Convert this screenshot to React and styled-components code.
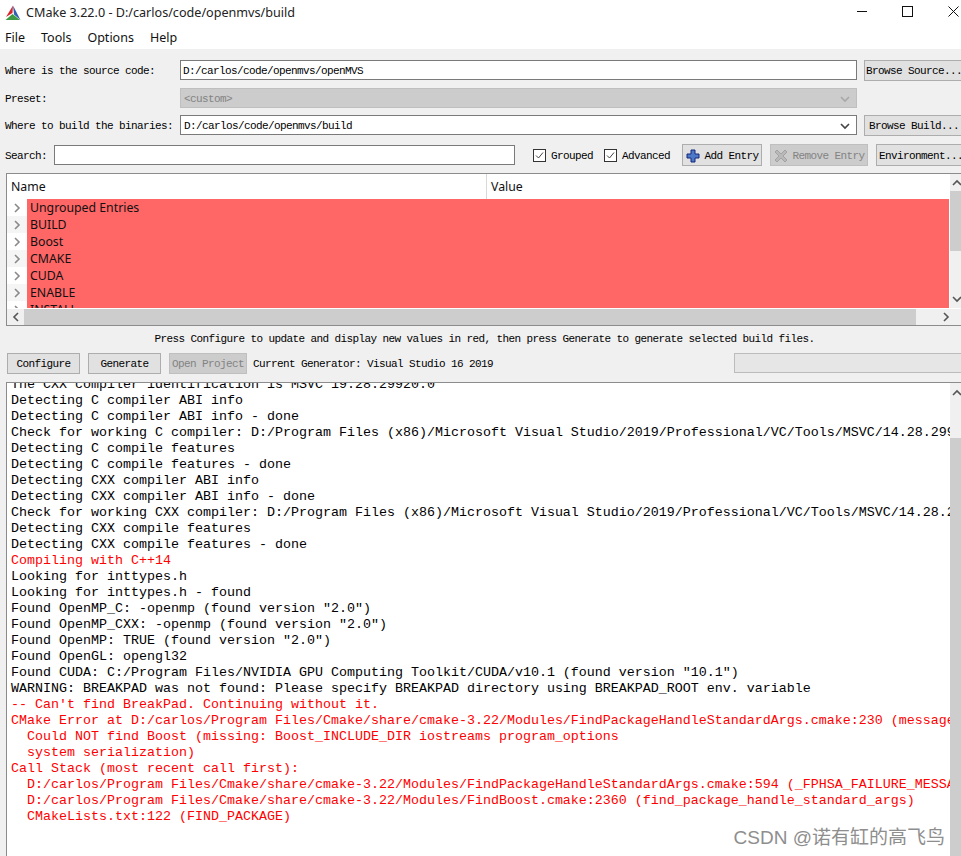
import React from 'react'
import styled, { createGlobalStyle } from 'styled-components'

const GlobalStyle = createGlobalStyle`
	html, body {
		margin: 0;
		padding: 0;
		background: #ffffff;
	}
`

const Win = styled.div`
	position: relative;
	width: 961px;
	height: 856px;
	overflow: hidden;
	background: #f0f0f0;
	color: #000;
	font-family: "Liberation Mono", monospace;
	font-size: 11px;
	letter-spacing: -0.6px;
`

const TitleBar = styled.div`
	display: flex;
	align-items: center;
	height: 25px;
	background: #fff;
	padding-left: 5px;
	margin-right: -15px;
	font-family: "Noto Sans", "Liberation Sans", sans-serif;
	font-size: 12.6px;
	letter-spacing: 0;
	color: #222;
`

const Title = styled.span`
	margin-left: 5px;
	flex: 1;
`

const WinButton = styled.div`
	width: 45.5px;
	height: 22px;
	align-self: flex-start;
	display: flex;
	align-items: center;
	justify-content: center;
`

const MenuBar = styled.div`
	display: flex;
	gap: 16px;
	height: 24px;
	padding: 1px 0 0 5px;
	box-sizing: border-box;
	background: #fff;
	align-items: center;
	font-family: "Noto Sans", "Liberation Sans", sans-serif;
	font-size: 12.5px;
	letter-spacing: 0;
	color: #111;
`

const Form = styled.div`
	display: flex;
	flex-direction: column;
	padding: 11px 0 0 5px;
`

const FormRow = styled.div`
	display: flex;
	align-items: ${p => p.$h ? 'center' : 'flex-start'};
	height: ${p => p.$h || 21}px;
	margin-bottom: ${p => p.$gap}px;
`

const Label = styled.div`
	display: flex;
	align-items: center;
	box-sizing: border-box;
	height: 20px;
	padding-top: 1px;
	width: ${p => p.$w}px;
	flex: none;
`

const Field = styled.div`
	display: flex;
	align-items: center;
	justify-content: space-between;
	box-sizing: border-box;
	width: ${p => p.$w}px;
	height: 20px;
	flex: none;
	padding: 1px 6px 0 ${p => p.$pad || 3}px;
	background: ${p => p.$disabled ? '#cccccc' : '#fff'};
	border: 1px solid ${p => p.$disabled ? '#bfbfbf' : '#7a7a7a'};
	color: ${p => p.$disabled ? '#838383' : '#000'};
`

const Btn = styled.div`
	display: flex;
	align-items: center;
	justify-content: center;
	gap: 5px;
	box-sizing: border-box;
	flex: none;
	padding-top: 1px;
	width: ${p => p.$w}px;
	height: ${p => p.$h || 21}px;
	margin-left: ${p => p.$ml || 0}px;
	background: ${p => p.$disabled ? '#cccccc' : '#e1e1e1'};
	border: 1px solid ${p => p.$disabled ? '#bfbfbf' : '#adadad'};
	color: ${p => p.$disabled ? '#838383' : '#000'};
	white-space: nowrap;
	overflow: hidden;
`

const Check = styled.div`
	display: flex;
	align-items: center;
	gap: 5px;
	flex: none;
	padding-top: 1px;
	margin-left: ${p => p.$ml}px;
`

const Box = styled.div`
	width: 11px;
	height: 11px;
	background: #fff;
	border: 1px solid #333;
	display: flex;
	align-items: center;
	justify-content: center;
`

const Tree = styled.div`
	box-sizing: border-box;
	width: 961px;
	height: 153px;
	margin: 7px 0 0 6px;
	background: #fff;
	border: 1px solid #8c8c8c;
	border-right: none;
	display: grid;
	grid-template-columns: 942px 1fr;
	grid-template-rows: 134px 17px;
	font-family: "Noto Sans", "Liberation Sans", sans-serif;
	font-size: 12.3px;
	letter-spacing: 0;
	color: #111;
`

const TreeMain = styled.div`
	overflow: hidden;
	display: flex;
	flex-direction: column;
`

const TreeHead = styled.div`
	display: flex;
	height: 25px;
	flex: none;
	align-items: center;
`

const HeadCell = styled.div`
	width: ${p => p.$w}px;
	height: 25px;
	box-sizing: border-box;
	display: flex;
	align-items: center;
	padding-left: 4px;
	border-right: ${p => p.$sep ? '1px solid #d9d9d9' : 'none'};
`

const TreeRow = styled.div`
	display: flex;
	height: 17px;
	flex: none;
	background: ${p => p.$alt ? '#f5f5f5' : '#fff'};
`

const Arrow = styled.div`
	width: 20px;
	flex: none;
	display: flex;
	align-items: center;
	justify-content: center;
`

const RowLabel = styled.div`
	flex: 1;
	background: #ff6666;
	padding-left: 3px;
	line-height: 17px;
`

const ScrollV = styled.div`
	display: flex;
	flex-direction: column;
	align-items: flex-start;
	background: #f0f0f0;
	margin-left: 1px;
`

const ScrollH = styled.div`
	display: flex;
	align-items: center;
	background: #f0f0f0;
	grid-column: 1 / 3;
	height: 16px;
	margin-top: 1px;
`

const ScrollEnd = styled.div`
	flex: none;
	display: flex;
	align-items: center;
	justify-content: center;
	width: ${p => p.$w || 14}px;
	height: ${p => p.$h || 16}px;
`

const Thumb = styled.div`
	background: #cdcdcd;
	flex: none;
	width: ${p => p.$w}px;
	height: ${p => p.$h}px;
	margin-top: ${p => p.$mt || 0}px;
`

const Spacer = styled.div`
	flex: 1;
`

const Hint = styled.div`
	text-align: center;
	height: 27px;
	line-height: 26px;
	padding-left: 8px;
`

const ActionRow = styled.div`
	display: flex;
	align-items: flex-start;
	padding-left: 7px;
	height: 21px;
`

const Generator = styled.div`
	margin-left: 6px;
	width: 481px;
	flex: none;
	line-height: 22px;
`

const Progress = styled.div`
	flex: 1;
	height: 20px;
	box-sizing: border-box;
	background: #e6e6e6;
	border: 1px solid #bcbcbc;
	border-right: none;
`

const Log = styled.div`
	display: flex;
	box-sizing: border-box;
	width: 955px;
	height: 474px;
	margin: 8px 0 0 6px;
	background: #fff;
	border-top: 1px solid #8c8c8c;
	border-left: 1px solid #8c8c8c;
	overflow: hidden;
`

const LogBody = styled.div`
	box-sizing: border-box;
	width: 943px;
	padding-left: 4px;
	overflow: hidden;
	flex: none;
	margin-top: -6px;
`

const LogLine = styled.div`
	font-size: 13.33px;
	letter-spacing: 0;
	line-height: 16px;
	height: 16px;
	white-space: pre;
	color: ${p => p.$err ? '#ff0000' : '#000'};
`

const LogScroll = styled.div`
	flex: 1;
	display: flex;
	flex-direction: column;
	align-items: flex-start;
	background: #f0f0f0;
	overflow: hidden;
`

const Watermark = styled.div`
	position: absolute;
	right: 16px;
	top: 822px;
	font-family: "Liberation Sans", "Noto Sans CJK SC", sans-serif;
	font-size: 19px;
	letter-spacing: 0;
	color: #8e8e8e;
	white-space: nowrap;
`

const Chevron = ({ dir = 'right', color = '#555', size = 10 }) => {
	const pts = {
		right: '3,1 7,5 3,9',
		left: '7,1 3,5 7,9',
		up: '1,7 5,3 9,7',
		down: '1,3 5,7 9,3'
	}
	return (
		<svg width={size} height={size} viewBox="0 0 10 10">
			<polyline points={pts[dir]} fill="none" stroke={color} strokeWidth="1.6" />
		</svg>
	)
}

const Logo = () => (
	<svg width="16" height="16" viewBox="0 0 16 16">
		<polygon points="8,0.5 1,12 7.5,8" fill="#d8242c" />
		<polygon points="8,0.5 15.5,15 9,9.5" fill="#2f5fb3" />
		<polygon points="0.5,15 15,15 7.5,9" fill="#3f9a46" />
	</svg>
)

const CheckMark = () => (
	<svg width="9" height="9" viewBox="0 0 9 9">
		<polyline points="1,4.5 3.5,7 8,1.5" fill="none" stroke="#444" strokeWidth="1" />
	</svg>
)

const PlusIcon = () => (
	<svg width="14" height="14" viewBox="0 0 14 14">
		<polygon points="5,1 9,1 9,5 13,5 13,9 9,9 9,13 5,13 5,9 1,9 1,5 5,5" fill="#4c78c8" stroke="#14267a" strokeWidth="1" />
	</svg>
)

const CrossIcon = () => (
	<svg width="14" height="14" viewBox="0 0 14 14">
		<path d="M3 1 L7 5 L11 1 L13 3 L9 7 L13 11 L11 13 L7 9 L3 13 L1 11 L5 7 L1 3 Z" fill="#b9b9b9" stroke="#a2a2a2" strokeWidth="1" />
	</svg>
)

const groups = ['Ungrouped Entries', 'BUILD', 'Boost', 'CMAKE', 'CUDA', 'ENABLE', 'INSTALL']

const logLines = [
	['The CXX compiler identification is MSVC 19.28.29920.0'],
	['Detecting C compiler ABI info'],
	['Detecting C compiler ABI info - done'],
	['Check for working C compiler: D:/Program Files (x86)/Microsoft Visual Studio/2019/Professional/VC/Tools/MSVC/14.28.29910/bin/Hostx64/x64/cl.exe'],
	['Detecting C compile features'],
	['Detecting C compile features - done'],
	['Detecting CXX compiler ABI info'],
	['Detecting CXX compiler ABI info - done'],
	['Check for working CXX compiler: D:/Program Files (x86)/Microsoft Visual Studio/2019/Professional/VC/Tools/MSVC/14.28.29910/bin/Hostx64/x64/cl.exe'],
	['Detecting CXX compile features'],
	['Detecting CXX compile features - done'],
	['Compiling with C++14', true],
	['Looking for inttypes.h'],
	['Looking for inttypes.h - found'],
	['Found OpenMP_C: -openmp (found version "2.0")'],
	['Found OpenMP_CXX: -openmp (found version "2.0")'],
	['Found OpenMP: TRUE (found version "2.0")'],
	['Found OpenGL: opengl32'],
	['Found CUDA: C:/Program Files/NVIDIA GPU Computing Toolkit/CUDA/v10.1 (found version "10.1")'],
	['WARNING: BREAKPAD was not found: Please specify BREAKPAD directory using BREAKPAD_ROOT env. variable'],
	["-- Can't find BreakPad. Continuing without it.", true],
	['CMake Error at D:/carlos/Program Files/Cmake/share/cmake-3.22/Modules/FindPackageHandleStandardArgs.cmake:230 (message):', true],
	['  Could NOT find Boost (missing: Boost_INCLUDE_DIR iostreams program_options', true],
	['  system serialization)', true],
	['Call Stack (most recent call first):', true],
	['  D:/carlos/Program Files/Cmake/share/cmake-3.22/Modules/FindPackageHandleStandardArgs.cmake:594 (_FPHSA_FAILURE_MESSAGE)', true],
	['  D:/carlos/Program Files/Cmake/share/cmake-3.22/Modules/FindBoost.cmake:2360 (find_package_handle_standard_args)', true],
	['  CMakeLists.txt:122 (FIND_PACKAGE)', true]
]

export default function App() {
	return (
		<Win>
			<GlobalStyle />
			<TitleBar>
				<Logo />
				<Title>CMake 3.22.0 - D:/carlos/code/openmvs/build</Title>
				<WinButton>
					<svg width="11" height="11" viewBox="0 0 11 11"><line x1="0" y1="5.5" x2="10" y2="5.5" stroke="#111" /></svg>
				</WinButton>
				<WinButton>
					<svg width="11" height="11" viewBox="0 0 11 11"><rect x="0.5" y="0.5" width="10" height="10" fill="none" stroke="#111" /></svg>
				</WinButton>
				<WinButton>
					<svg width="11" height="11" viewBox="0 0 11 11"><path d="M0.5 0.5 L10.5 10.5 M10.5 0.5 L0.5 10.5" stroke="#111" /></svg>
				</WinButton>
			</TitleBar>
			<MenuBar>
				<span>File</span>
				<span>Tools</span>
				<span>Options</span>
				<span>Help</span>
			</MenuBar>
			<Form>
				<FormRow $gap={7}>
					<Label $w={175}>Where is the source code:</Label>
					<Field $w={677} $pad={2}>D:/carlos/code/openmvs/openMVS</Field>
					<Btn $w={100} $ml={7}>Browse Source...</Btn>
				</FormRow>
				<FormRow $gap={6}>
					<Label $w={175}>Preset:</Label>
					<Field $w={677} $disabled>
						&lt;custom&gt;
						<Chevron dir="down" color="#a8a8a8" />
					</Field>
				</FormRow>
				<FormRow $gap={8}>
					<Label $w={175}>Where to build the binaries:</Label>
					<Field $w={677}>
						D:/carlos/code/openmvs/build
						<Chevron dir="down" color="#444" />
					</Field>
					<Btn $w={100} $ml={7}>Browse Build...</Btn>
				</FormRow>
				<FormRow $gap={0} $h={22}>
					<Label $w={49}>Search:</Label>
					<Field $w={461} />
					<Check $ml={18}><Box><CheckMark /></Box>Grouped</Check>
					<Check $ml={11}><Box><CheckMark /></Box>Advanced</Check>
					<Btn $w={80} $h={22} $ml={12}><PlusIcon />Add Entry</Btn>
					<Btn $w={98} $h={22} $ml={8} $disabled><CrossIcon />Remove Entry</Btn>
					<Btn $w={90} $h={22} $ml={8}>Environment...</Btn>
				</FormRow>
			</Form>
			<Tree>
				<TreeMain>
					<TreeHead>
						<HeadCell $w={480} $sep>Name</HeadCell>
						<HeadCell $w={462}>Value</HeadCell>
					</TreeHead>
					{groups.map((g, i) => (
						<TreeRow key={g} $alt={i % 2 === 1}>
							<Arrow><Chevron color="#8a8a8a" /></Arrow>
							<RowLabel>{g}</RowLabel>
						</TreeRow>
					))}
				</TreeMain>
				<ScrollV>
					<ScrollEnd $h={17}><Chevron dir="up" /></ScrollEnd>
					<Thumb $w={14} $h={60} />
					<Spacer />
					<ScrollEnd $h={18}><Chevron dir="down" /></ScrollEnd>
				</ScrollV>
				<ScrollH>
					<ScrollEnd $w={17}><Chevron dir="left" /></ScrollEnd>
					<Thumb $w={892} $h={16} />
					<Spacer />
					<ScrollEnd $w={43}><Chevron /></ScrollEnd>
				</ScrollH>
			</Tree>
			<Hint>Press Configure to update and display new values in red, then press Generate to generate selected build files.</Hint>
			<ActionRow>
				<Btn $w={73}>Configure</Btn>
				<Btn $w={73} $ml={8}>Generate</Btn>
				<Btn $w={78} $ml={8} $disabled>Open Project</Btn>
				<Generator>Current Generator: Visual Studio 16 2019</Generator>
				<Progress />
			</ActionRow>
			<Log>
				<LogBody>
					{logLines.map(([text, err], i) => (
						<LogLine key={i} $err={err}>{text}</LogLine>
					))}
				</LogBody>
				<LogScroll>
					<ScrollEnd $h={20}><Chevron dir="up" /></ScrollEnd>
					<Thumb $w={14} $h={420} $mt={35} />
				</LogScroll>
			</Log>
			<Watermark>CSDN @诺有缸的高飞鸟</Watermark>
		</Win>
	)
}
